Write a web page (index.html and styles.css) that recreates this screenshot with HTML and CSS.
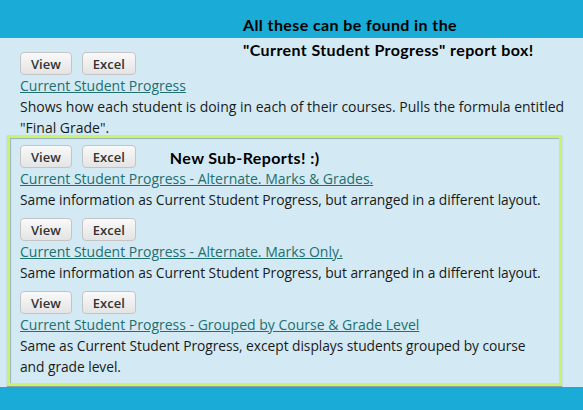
FILE: index.html
```html
<!DOCTYPE html>
<html lang="en">
<head>
    <meta charset="UTF-8">
    <title>Current Student Progress Reports</title>
    <link rel="stylesheet" href="styles.css">
</head>
<body>
    <div class="top-bar"></div>

    <div class="note">
        <p>All these can be found in the</p>
        <p>"Current Student Progress" report box!</p>
    </div>

    <div class="reports">
        <div class="report main-report">
            <div class="buttons">
                <button class="btn">View</button>
                <button class="btn">Excel</button>
            </div>
            <a href="#" class="report-link">Current Student Progress</a>
            <p class="report-desc">Shows how each student is doing in each of their courses. Pulls the formula entitled "Final Grade".</p>
        </div>

        <div class="sub-box">
            <div class="report">
                <div class="buttons">
                    <button class="btn">View</button>
                    <button class="btn">Excel</button>
                    <span class="new-label">New Sub-Reports! :)</span>
                </div>
                <a href="#" class="report-link">Current Student Progress - Alternate. Marks &amp; Grades.</a>
                <p class="report-desc">Same information as Current Student Progress, but arranged in a different layout.</p>
            </div>

            <div class="report">
                <div class="buttons">
                    <button class="btn">View</button>
                    <button class="btn">Excel</button>
                </div>
                <a href="#" class="report-link">Current Student Progress - Alternate. Marks Only.</a>
                <p class="report-desc">Same information as Current Student Progress, but arranged in a different layout.</p>
            </div>

            <div class="report">
                <div class="buttons">
                    <button class="btn">View</button>
                    <button class="btn">Excel</button>
                </div>
                <a href="#" class="report-link">Current Student Progress - Grouped by Course &amp; Grade Level</a>
                <p class="report-desc">Same as Current Student Progress, except displays students grouped by course and grade level.</p>
            </div>
        </div>
    </div>

    <div class="bottom-bar"></div>
</body>
</html>
```

FILE: styles.css
```css
:root {
    --blue: #1aacd6;
    --light: #d3eaf4;
    --lime: #c6f46e;
    --link: #216f70;
    --text: #1a1a1a;
}

body {
    margin: 0;
    width: 583px;
    height: 410px;
    overflow: hidden;
    position: relative;
    background-color: var(--light);
    font-family: 'Open Sans', sans-serif;
    font-size: 14px;
    line-height: 21px;
    color: var(--text);
}

.top-bar {
    height: 38px;
    background-color: var(--blue);
}

.bottom-bar {
    height: 23px;
    background-color: var(--blue);
}

/* annotation laid over the page */
.note {
    position: absolute;
    left: 243px;
    top: 12px;
    font-family: Lato, sans-serif;
    font-weight: bold;
    font-size: 16px;
    letter-spacing: 0.4px;
    line-height: 25px;
    color: #000;
}

.note p {
    margin: 0;
}

.reports {
    padding: 14px 0 0 20px;
    height: 349px;
    box-sizing: border-box;
}

.report {
    margin-bottom: 8px;
}

.report:last-child,
.main-report {
    margin-bottom: 0;
}

.buttons {
    display: flex;
    align-items: flex-start;
    gap: 10px;
    height: 23px;
}

.btn {
    height: 23px;
    padding: 0 10px;
    font-family: 'Open Sans', sans-serif;
    font-size: 13px;
    font-weight: 600;
    color: #333;
    background: linear-gradient(#f9f9f9, #e4e4e4);
    border: 1px solid #c4c4c4;
    border-radius: 4px;
}

.new-label {
    margin: 2px 0 0 24px;
    font-family: Lato, sans-serif;
    font-weight: bold;
    font-size: 16px;
    line-height: 21px;
    letter-spacing: 0.4px;
    color: #000;
}

.report-link {
    display: block;
    color: var(--link);
    text-decoration: underline;
}

.report-desc {
    margin: 0;
}

.sub-box {
    width: 555px;
    box-sizing: border-box;
    margin: -3px 0 0 -13px;
    padding: 7px 0 6px 10px;
    border: 3px solid var(--lime);
    box-shadow: inset 1px 1px 1px rgba(0,0,0,0.25), 0 1px 1px rgba(0,0,0,0.3);
}

.sub-box .report-desc {
    max-width: 525px;
    font-size: 13.8px;
    letter-spacing: -0.05px;
}
```
